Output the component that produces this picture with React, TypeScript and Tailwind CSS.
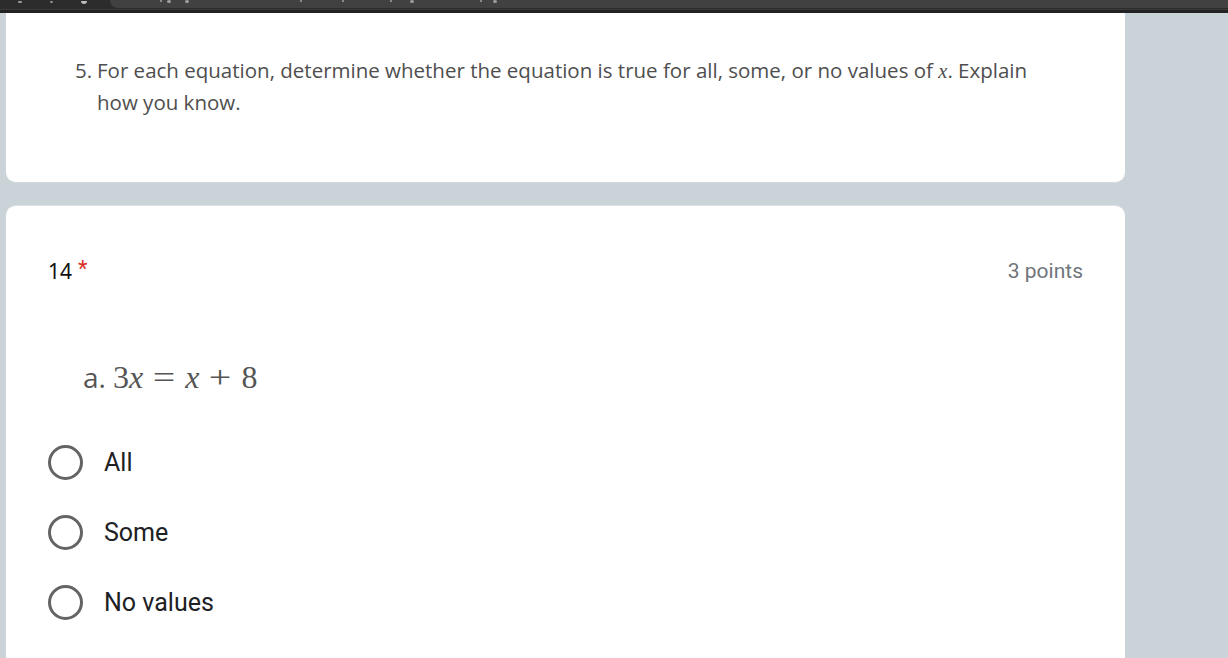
import React from "react";

function Radio({ label }: { label: string }) {
  return (
    <div className="flex h-[70px] items-center">
      <div className="h-[35px] w-[35px] rounded-full border-[3px] border-[#626466]" />
      <span
        className="ml-[21px] text-[25px] leading-none text-[#202124]"
        style={{ fontFamily: "Roboto, Arial, sans-serif" }}
      >
        {label}
      </span>
    </div>
  );
}

export default function App() {
  return (
    <div className="flex h-[658px] w-[1228px] flex-col overflow-hidden bg-[#c9d3d8]">
      {/* browser chrome strip */}
      <div className="relative h-[13px] w-full shrink-0 bg-[#2c2c2c]">
        <div className="flex h-[9px] items-start">
          <div className="flex h-[9px] w-[110px] items-start gap-[28px] pl-[18px]">
            <span className="mt-[1px] h-[2px] w-[4px] rounded-full bg-[#9a9a9a]" />
            <span className="mt-[1px] h-[2px] w-[3px] rounded-full bg-[#8a8a8a]" />
            <span className="mt-[1px] h-[3px] w-[6px] rounded-b-full bg-[#bcbcbc]" />
          </div>
          <div className="relative h-[8px] flex-1 rounded-bl-[12px] bg-[#414141]">
            <span className="absolute left-[50px] top-0 h-[2px] w-[2px] bg-[#8c8c8c]" />
            <span className="absolute left-[57px] top-0 h-[3px] w-[4px] rounded-full bg-[#9c9c9c]" />
            <span className="absolute left-[75px] top-0 h-[3px] w-[4px] rounded-full bg-[#9c9c9c]" />
            <span className="absolute left-[190px] top-0 h-[2px] w-[2px] bg-[#888]" />
            <span className="absolute left-[232px] top-0 h-[2px] w-[2px] bg-[#888]" />
            <span className="absolute left-[280px] top-0 h-[2px] w-[2px] bg-[#888]" />
            <span className="absolute left-[300px] top-0 h-[3px] w-[4px] rounded-full bg-[#999]" />
            <span className="absolute left-[370px] top-0 h-[2px] w-[2px] bg-[#888]" />
            <span className="absolute left-[383px] top-0 h-[3px] w-[4px] rounded-full bg-[#999]" />
          </div>
        </div>
        <div className="h-[1px] w-full bg-[#3a3a3a]" />
        <div className="h-[3px] w-full bg-[#222]" />
      </div>

      <div className="flex flex-col pl-[6px]">
        {/* card 1 */}
        <div className="h-[170px] w-[1119px] rounded-b-[10px] border-b border-[#d5d9dc] bg-white pl-[69px] pt-[42px]">
          <div
            className="flex text-[20.5px] leading-[31px] text-[#4e4e4e]"
            style={{ fontFamily: "'Open Sans', Arial, sans-serif" }}
          >
            <span className="w-[22px] shrink-0">5.</span>
            <span>
              For each equation, determine whether the equation is true for all, some, or no values of{" "}
              <span className="italic" style={{ fontFamily: "'Liberation Serif', 'Times New Roman', serif" }}>
                x
              </span>
              . Explain
              <br />
              how you know.
            </span>
          </div>
        </div>

        {/* card 2 */}
        <div className="mt-[22px] h-[500px] w-[1119px] rounded-t-[10px] border-t border-[#dfe2e4] bg-white px-[42px] pt-[50px]">
          <div className="flex h-[30px] items-center justify-between">
            <div className="flex items-start">
              <span
                className="text-[21px] leading-none text-[#111]"
                style={{ fontFamily: "'Noto Sans', Arial, sans-serif" }}
              >
                14
              </span>
              <span
                className="ml-[6px] -mt-[3px] text-[22px] leading-none text-[#d93025]"
                style={{ fontFamily: "Roboto, Arial, sans-serif" }}
              >
                *
              </span>
            </div>
            <span
              className="text-[21px] leading-none text-[#70757a]"
              style={{ fontFamily: "Roboto, Arial, sans-serif" }}
            >
              3 points
            </span>
          </div>

          <div className="mt-[71px] flex h-[40px] items-center pl-[35px] text-[#555]">
            <span className="text-[28px] leading-none" style={{ fontFamily: "'Open Sans', Arial, sans-serif" }}>
              a.
            </span>
            <span
              className="ml-[7px] flex items-center text-[32px] leading-none"
              style={{ fontFamily: "'Liberation Serif', 'Times New Roman', serif" }}
            >
              <span>3</span>
              <span className="italic">x</span>
              <span className="mx-[12px] scale-x-125">=</span>
              <span className="italic">x</span>
              <span className="mx-[12px] scale-x-125">+</span>
              <span>8</span>
            </span>
          </div>

          <div className="mt-[30px] flex flex-col">
            <Radio label="All" />
            <Radio label="Some" />
            <Radio label="No values" />
          </div>
        </div>
      </div>
    </div>
  );
}
